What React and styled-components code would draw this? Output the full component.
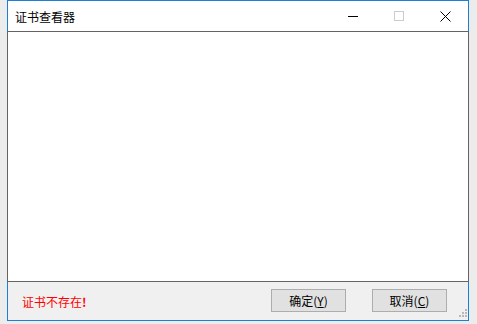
import React from "react";
import styled, { createGlobalStyle } from "styled-components";

const Global = createGlobalStyle`
  html, body { margin: 0; padding: 0; }
  body {
    background: #ebebeb;
    font-family: "Noto Sans CJK SC", "Noto Sans", sans-serif;
  }
`;

const Desktop = styled.div`
  width: 477px;
  height: 324px;
  box-sizing: border-box;
  padding: 0 8px 3px 7px;
  background: #ececec;
  background-image: radial-gradient(#e2e2e2 0.6px, transparent 0.7px);
  background-size: 2px 2px;
`;

const Window = styled.div`
  width: 462px;
  height: 321px;
  display: flex;
  flex-direction: column;
  background: #f0f0f0;
`;

const TitleBar = styled.div`
  height: 31px;
  box-sizing: border-box;
  border: 1px solid #1c7fd6;
  border-bottom: none;
  background: #ffffff;
  display: flex;
  align-items: stretch;
`;

const Title = styled.div`
  flex: 1;
  padding-left: 7px;
  padding-top: 1px;
  display: flex;
  align-items: center;
  font-size: 12px;
  color: #000;
`;

const CaptionButton = styled.div`
  width: 46px;
  display: flex;
  align-items: center;
  justify-content: center;
  padding-top: ${(p) => p.$dy || 0}px;
  box-sizing: border-box;
`;

const Content = styled.div`
  height: 251px;
  box-sizing: border-box;
  border: 1px solid #646464;
  background: #ffffff;
`;

const StatusBar = styled.div`
  position: relative;
  flex: 1;
  box-sizing: border-box;
  border: 1px solid #1c7fd6;
  border-top: none;
  background: #f0f0f0;
  display: flex;
  align-items: center;
  padding: 0 21px 1px 14px;
`;

const ErrorText = styled.div`
  flex: 1;
  color: #ff0000;
  font-size: 12px;
  padding-top: 1px;
`;

const Bang = styled.span`
  font-weight: 700;
`;

const Button = styled.div`
  width: 75px;
  height: 23px;
  box-sizing: border-box;
  border: 1px solid #adadad;
  background: #e1e1e1;
  display: flex;
  align-items: center;
  justify-content: center;
  font-size: 12px;
  color: #000;
  margin-left: ${(p) => p.$gap || 0}px;
`;

const Key = styled.span`
  text-decoration: underline;
  text-underline-offset: 1px;
`;

const Grip = styled.svg`
  position: absolute;
  right: 1px;
  bottom: 3px;
`;

export default function App() {
  return (
    <>
      <Global />
      <Desktop>
        <Window>
          <TitleBar>
            <Title>证书查看器</Title>
            <CaptionButton $dy={1}>
              <svg width="10" height="10" viewBox="0 0 10 10">
                <rect x="0" y="4" width="10" height="1" fill="#000" />
              </svg>
            </CaptionButton>
            <CaptionButton>
              <svg width="10" height="10" viewBox="0 0 10 10">
                <rect x="0.5" y="0.5" width="9" height="9" fill="none" stroke="#cccccc" strokeWidth="1" />
              </svg>
            </CaptionButton>
            <CaptionButton>
              <svg width="11" height="11" viewBox="0 0 11 11">
                <path d="M0.5 0.5 L10.5 10.5 M10.5 0.5 L0.5 10.5" stroke="#000" strokeWidth="1" />
              </svg>
            </CaptionButton>
          </TitleBar>
          <Content />
          <StatusBar>
            <ErrorText>
              证书不存在<Bang>!</Bang>
            </ErrorText>
            <Button>
              确定(<Key>Y</Key>)
            </Button>
            <Button $gap={26}>
              取消(<Key>C</Key>)
            </Button>
            <Grip width="8" height="8" viewBox="0 0 8 8">
              <rect x="6" y="0" width="2" height="2" fill="#b8b8b8" />
              <rect x="3" y="3" width="2" height="2" fill="#b8b8b8" />
              <rect x="6" y="3" width="2" height="2" fill="#b8b8b8" />
              <rect x="0" y="6" width="2" height="2" fill="#b8b8b8" />
              <rect x="3" y="6" width="2" height="2" fill="#b8b8b8" />
              <rect x="6" y="6" width="2" height="2" fill="#b8b8b8" />
            </Grip>
          </StatusBar>
        </Window>
      </Desktop>
    </>
  );
}
